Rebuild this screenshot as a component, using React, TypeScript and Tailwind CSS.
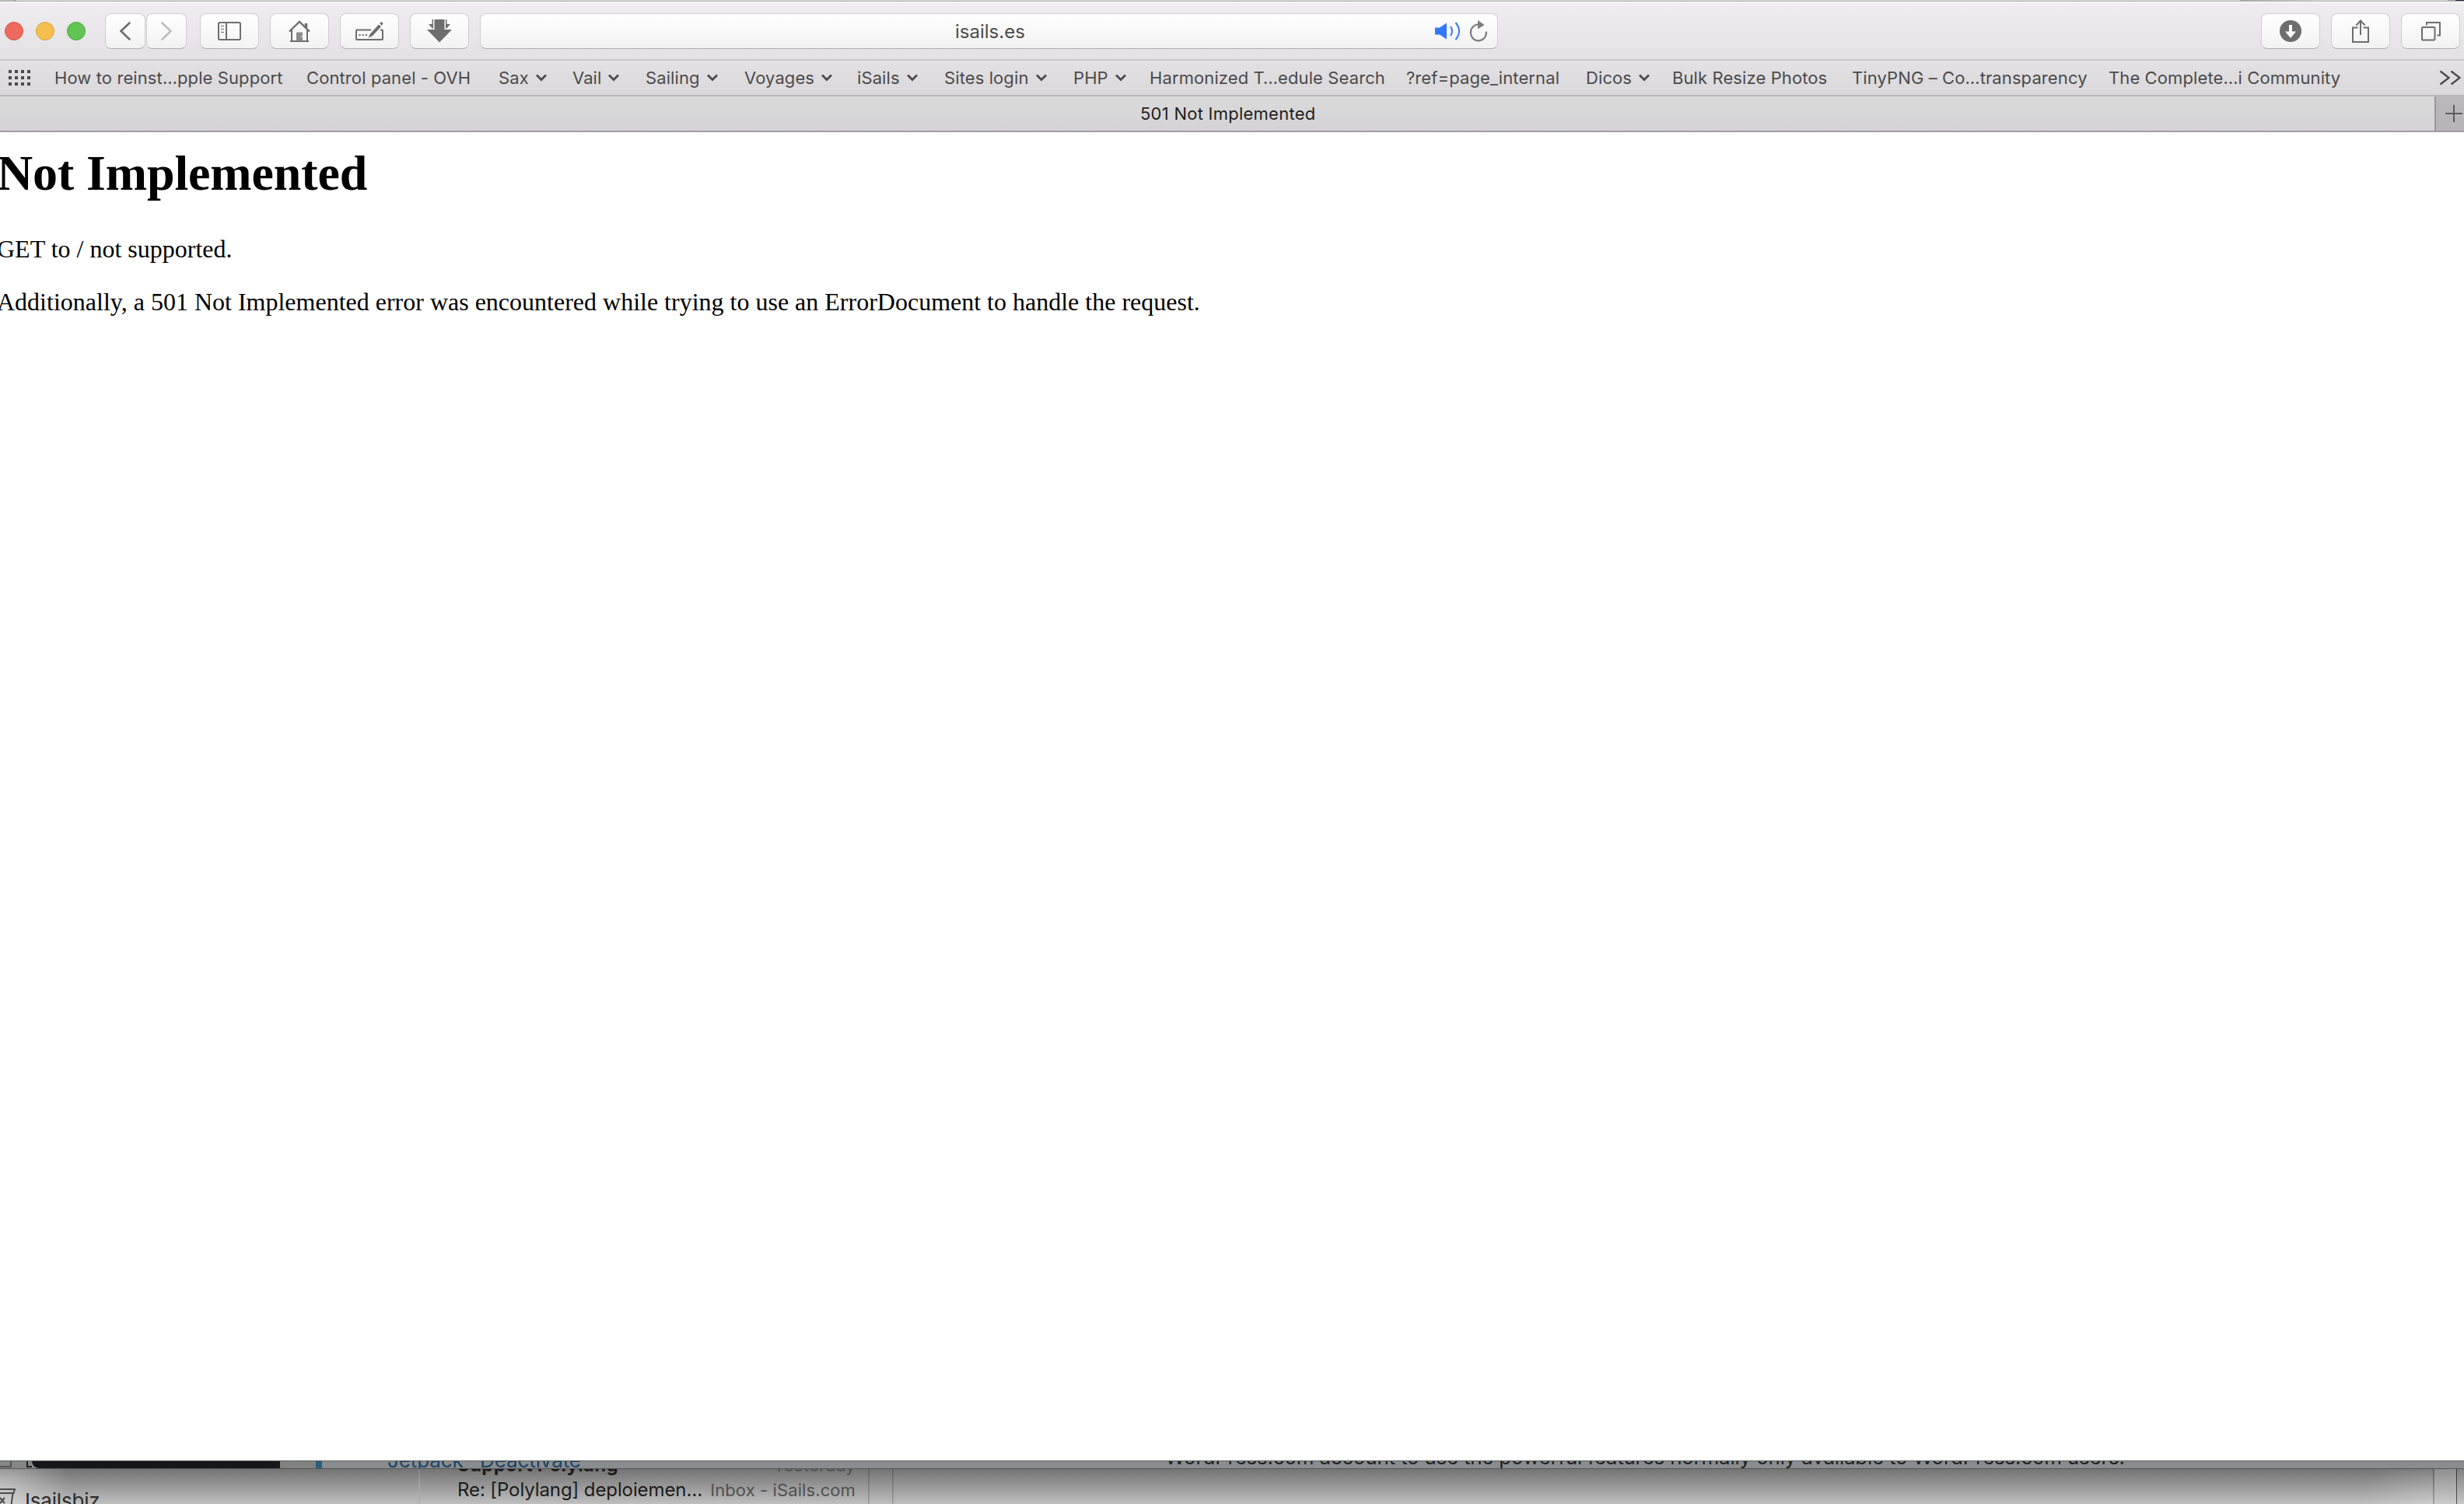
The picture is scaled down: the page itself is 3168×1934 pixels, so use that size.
import React from 'react';
import clsx from 'clsx';

interface Bookmark {
    label: string;
    width: string;
    menu?: boolean;
}

// width covers the label, its arrow and the space before the next item
const bookmarks: Bookmark[] = [
    { label: 'How to reinst…pple Support', width: 'w-[324px]' },
    { label: 'Control panel - OVH', width: 'w-[247px]' },
    { label: 'Sax', width: 'w-[95px]', menu: true },
    { label: 'Vail', width: 'w-[94px]', menu: true },
    { label: 'Sailing', width: 'w-[127px]', menu: true },
    { label: 'Voyages', width: 'w-[145px]', menu: true },
    { label: 'iSails', width: 'w-[112px]', menu: true },
    { label: 'Sites login', width: 'w-[166px]', menu: true },
    { label: 'PHP', width: 'w-[98px]', menu: true },
    { label: 'Harmonized T…edule Search', width: 'w-[330px]' },
    { label: '?ref=page_internal', width: 'w-[231px]' },
    { label: 'Dicos', width: 'w-[111px]', menu: true },
    { label: 'Bulk Resize Photos', width: 'w-[231px]' },
    { label: 'TinyPNG – Co…transparency', width: 'w-[330px]' },
    { label: 'The Complete…i Community', width: 'w-[425px]' },
];

const ToolButton: React.FC<{ className?: string; children: React.ReactNode }> = ({ className, children }) => (
    <button
        className={clsx(
            'h-[46px] shrink-0 flex items-center justify-center rounded-[8px] border border-[#d0ced0] border-b-[#aeb0ae] bg-gradient-to-b from-white to-[#f2f2f2]',
            className
        )}
    >
        {children}
    </button>
);

const Toolbar = () => (
    <div className="h-[76px] shrink-0 flex items-start pt-[15px] border-b-2 border-[#cac8cb] bg-gradient-to-b from-[#efedf0] to-[#e3e1e4] shadow-[inset_0_2px_0_#f8f7f8]">
        <div className="flex gap-4 pl-[6px] pt-[11px] w-[135px] shrink-0">
            <span className="size-6 rounded-full bg-[#ee6a5f] border border-[#d9534a]" />
            <span className="size-6 rounded-full bg-[#f5bf4f] border border-[#d8a13c]" />
            <span className="size-6 rounded-full bg-[#61c554] border border-[#4fa73f]" />
        </div>

        <div className="flex gap-px w-[122px] shrink-0">
            <ToolButton className="w-[52px]">
                <svg width="16" height="26" viewBox="0 0 16 26" fill="none" stroke="#6e6e6e" strokeWidth="2.6" strokeLinecap="round">
                    <path d="M13.5 2.5 2.5 13l11 10.500" />
                </svg>
            </ToolButton>
            <ToolButton className="w-[52px]">
                <svg width="16" height="26" viewBox="0 0 16 26" fill="none" stroke="#bdbdbd" strokeWidth="2.6" strokeLinecap="round">
                    <path d="M2.500 2.500 13.500 13l-11 10.500" />
                </svg>
            </ToolButton>
        </div>

        <div className="flex gap-[14px] w-[360px] shrink-0">
            <ToolButton className="w-[76px]">
                <svg width="30" height="24" viewBox="0 0 30 24" fill="none" stroke="#6e6e6e" strokeWidth="2">
                    <rect x="1" y="1" width="28" height="22" rx="1.500" />
                    <path d="M11 1v22" />
                    <path d="M4 5.500h4M4 9.500h4M4 13.500h4" stroke="#8a8a8a" strokeWidth="1.500" />
                </svg>
            </ToolButton>
            <ToolButton className="w-[76px]">
                <svg width="28" height="28" viewBox="0 0 28 28" fill="none" stroke="#6e6e6e" strokeWidth="2">
                    <path d="M1 14.500 14 2l13 12.500" strokeWidth="2.400" />
                    <path d="M4 12v14M24 12v14M2 27h24" />
                    <path d="M22.500 4v6" strokeWidth="3.500" />
                    <rect x="10" y="15.500" width="8" height="11" fill="#8c8c8c" stroke="none" />
                    <circle cx="16.500" cy="21" r=".8" fill="#fff" stroke="none" />
                </svg>
            </ToolButton>
            <ToolButton className="w-[76px]">
                <svg width="38" height="26" viewBox="0 0 38 26" fill="none" stroke="#6e6e6e" strokeWidth="2">
                    <path d="M21 11.500H3q-1 0-1 1V23q0 1 1 1h32q1 0 1-1V12.500q0-1-1-1h-2" />
                    <path d="M5.500 18h2M9.700 18h2M13.900 18h2" />
                    <path d="M17.500 21.800 20 16.500 31 4.500l3 2.800L23 19Z" fill="#6e6e6e" stroke="none" />
                    <path d="m32.200 3.200 1.300-1.500q1-.8 2.200.3 1.200 1.200.4 2.200L34.900 5.800Z" fill="#6e6e6e" stroke="none" />
                </svg>
            </ToolButton>
            <ToolButton className="w-[76px]">
                <svg width="32" height="30" viewBox="0 0 32 30" fill="#6e6e6e">
                    <path d="M9.500 0h13v13H32L16 29.500 0 13h9.500Z" />
                    <path d="M6.500 0H8v11.500H6.800L2 6h4.500ZM24 0h1.500v6H30l-4.800 5.500H24Z" />
                </svg>
            </ToolButton>
        </div>

        <div className="h-[46px] w-[1309px] shrink-0 flex items-center rounded-[8px] border border-[#d0ced0] border-b-[#aeb0ae] bg-gradient-to-b from-white to-[#f2f2f2]">
            <span className="pl-[610px] w-[1226px] pt-[2px] text-[24px] leading-[44px] text-[#4d4d4d]">isails.es</span>
            <svg className="shrink-0" width="34" height="24" viewBox="0 0 34 24" fill="none" stroke="#3478f6" strokeWidth="2">
                <path d="M1 7.500h6l9-6v21l-9-6H1Z" fill="#3478f6" stroke="none" />
                <path d="M21 6q4 6 0 12" />
                <path d="M27.500 1q9 11 0 22" />
            </svg>
            <svg className="ml-[11px] shrink-0" width="24" height="28" viewBox="0 0 24 28" fill="none" stroke="#7d7d7d" strokeWidth="2.200">
                <path d="M21.800 14.500A10 10.500 0 1 1 13 5.500" />
                <path d="M11 0 19.500 6 11 11.500Z" fill="#7d7d7d" stroke="none" />
            </svg>
        </div>

        <div className="flex gap-[14px] ml-auto pr-[5px]">
            <ToolButton className="w-[76px]">
                <svg width="28" height="28" viewBox="0 0 28 28">
                    <circle cx="14" cy="14" r="14" fill="#6e6e6e" />
                    <path d="M12 6h4v8.500h5L14 23 7 14.500h5Z" fill="#fff" />
                </svg>
            </ToolButton>
            <ToolButton className="w-[76px]">
                <svg width="24" height="30" viewBox="0 0 24 30" fill="none" stroke="#6e6e6e" strokeWidth="2">
                    <path d="M8.500 10.500H2V29h20V10.500h-6.500" />
                    <path d="M12 20V1.500M6.500 7.500 12 1.500l5.500 6" />
                </svg>
            </ToolButton>
            <ToolButton className="w-[76px]">
                <svg width="26" height="26" viewBox="0 0 26 26" fill="none" stroke="#6e6e6e" strokeWidth="2">
                    <rect x="2" y="8" width="16.500" height="16.500" rx="1" />
                    <path d="M8 5.500V2h17v16.500h-3.500" />
                </svg>
            </ToolButton>
        </div>
    </div>
);

const BookmarksBar = () => (
    <div className="h-[46px] shrink-0 flex items-center border-b-2 border-[#b9b7ba] bg-gradient-to-b from-[#e3e1e4] to-[#dad8db] text-[22px] tracking-[0.1px] text-[#4c4a4c]">
        <div className="w-[70px] pl-[11px] shrink-0">
            <div className="grid grid-cols-4 gap-1 w-7">
                {Array.from({ length: 12 }, (_, i) => (
                    <span key={i} className="size-1 bg-[#4c4a4c]" />
                ))}
            </div>
        </div>
        {bookmarks.map((item) => (
            <div key={item.label} className={clsx('shrink-0 flex items-center gap-[9px] whitespace-nowrap', item.width)}>
                <span>{item.label}</span>
                {item.menu && (
                    <svg width="14" height="10" viewBox="0 0 14 10" fill="none" stroke="#4c4a4c" strokeWidth="2.800">
                        <path d="m1 1.500 6 6 6-6" />
                    </svg>
                )}
            </div>
        ))}
        <svg className="shrink-0" width="28" height="20" viewBox="0 0 28 20" fill="none" stroke="#4c4a4c" strokeWidth="2.400">
            <path d="m1.500 1.500 11 8.500-11 8.500M15.500 1.500l11 8.500-11 8.500" />
        </svg>
    </div>
);

const TabBar = () => (
    <div className="h-[46px] shrink-0 flex border-b-2 border-[#9f9d9f]">
        <div className="w-[3130px] flex items-center bg-gradient-to-b from-[#dadada] to-[#d5d3d6]">
            <span className="pl-[1466px] text-[22px] tracking-[0.25px] text-[#1f1f21] whitespace-nowrap">501 Not Implemented</span>
        </div>
        <div className="w-[38px] flex items-center pl-[11px] border-l-2 border-[#999799] bg-gradient-to-b from-[#bbb9bc] to-[#b6b4b7]">
            <svg className="shrink-0" width="24" height="24" viewBox="0 0 24 24" stroke="#5c5a5c" strokeWidth="2">
                <path d="M12 1v22M1 12h22" />
            </svg>
        </div>
    </div>
);

const ArchiveIcon = () => (
    <svg className="shrink-0" width="20" height="26" viewBox="0 0 20 26" fill="none" stroke="#4b4b4b" strokeWidth="2">
        <path d="M-4 1h23l-1.500 5H-4M16.500 6 14 25H-4" />
        <path d="m0 12 6 7M6 12l-6 7" />
    </svg>
);

// Windows that show under the browser: a strip of the WordPress admin, then Mail
const BackgroundWindows = () => (
    <div className="h-14 shrink-0 flex flex-col overflow-hidden">
        <div className="h-[11px] shrink-0 flex border-t border-b border-t-[#5c625c] border-b-[#555555] bg-[#8a8d8f] overflow-hidden">
            <div className="w-[41px] shrink-0 h-3 bg-[#858585] flex overflow-hidden">
                <div className="h-[8px] w-[15px] border-r-2 border-b-2 border-[#555] mr-[19px]" />
                <div className="h-[8px] w-[7px] border-l-2 border-b-2 border-[#222]" />
            </div>
            <div className="w-[319px] shrink-0 rounded-bl-[10px] bg-[#15181b]" />
            <div className="w-[46px] shrink-0 bg-[#828282]" />
            <div className="w-2 shrink-0 bg-[#27607f]" />
            <div className="relative w-full">
                <span className="absolute left-[84px] -top-[17px] text-[26px] leading-[32px] tracking-[-0.1px] text-[#1c4568] whitespace-nowrap">Jetpack</span>
                <span className="absolute left-[203px] -top-[17px] text-[26px] leading-[32px] tracking-[-0.1px] text-[#1c4568] whitespace-nowrap">Deactivate</span>
                <span className="absolute left-[1084px] -top-[21px] text-[26px] leading-[32px] tracking-[-0.24px] text-[#1e2224] whitespace-nowrap">
                    WordPress.com account to use the powerful features normally only available to WordPress.com users.
                </span>
            </div>
        </div>
        <div className="h-[45px] shrink-0 flex overflow-hidden bg-gradient-to-b from-[#747474] to-[#bfbfbf] bg-clip-border">
            <div className="w-[540px] shrink-0 flex items-start pt-[25px] border-r-2 border-black/15 bg-[radial-gradient(ellipse_90px_70px_at_0_50%,rgba(255,255,255,0.4),transparent)]">
                <ArchiveIcon />
                <span className="pl-3 text-[26px] leading-[32px] tracking-[-0.2px] text-[#2a2a2a]">Isailsbiz</span>
            </div>
            <div className="w-[578px] shrink-0 pl-[48px] pr-[16px] border-r-2 border-black/15 text-[24px] leading-[32px] whitespace-nowrap">
                <div className="-mt-[21px] flex justify-between">
                    <span className="font-bold tracking-[0.3px] text-[#1b1b1b]">Support Polylang</span>
                    <span className="text-[22px] tracking-[0.3px] text-[#505050]">Yesterday</span>
                </div>
                <div className="flex justify-between">
                    <span className="tracking-[-0.1px] text-[#1b1b1b]">Re: [Polylang] deploiemen…</span>
                    <span className="text-[22px] tracking-[0.1px] text-[#505050]">Inbox - iSails.com</span>
                </div>
            </div>
            <div className="w-[31px] shrink-0 border-r-2 border-black/15" />
            <div className="w-[1981px] shrink-0 border-r-2 border-black/15 bg-[radial-gradient(ellipse_90px_70px_at_100%_100%,rgba(255,255,255,0.2),transparent)]" />
            <div className="w-[29px] shrink-0 border-r border-black/60 bg-white/20" />
            <div className="grow bg-white/10" />
        </div>
    </div>
);

export default function App() {
    return (
        <div className="w-[3168px] h-[1934px] flex flex-col overflow-hidden bg-white font-['Inter',sans-serif]">
            <div className="h-[2px] shrink-0 flex bg-[#dcdcdb] border-b border-[#adaead]">
                <div className="w-[20px] bg-[#bdbdbd] border-r border-[#666]" />
                <div className="ml-auto w-[267px] bg-gradient-to-r from-[#a5a5a5] to-[#dcdcdb] to-40%" />
                <div className="w-[10px] bg-[#aaa]" />
                <div className="w-[11px] bg-[#1c2a3f]" />
            </div>
            <Toolbar />
            <BookmarksBar />
            <TabBar />
            <main className="h-[1708px] shrink-0 -ml-[4px] pt-4 text-black font-['Liberation_Serif',serif]">
                <h1 className="text-[64px] leading-[74px] tracking-[-0.13px] font-bold">Not Implemented</h1>
                <p className="mt-[42px] text-[32px] leading-[36px]">GET to / not supported.</p>
                <p className="mt-8 text-[32px] leading-[36px]">
                    Additionally, a 501 Not Implemented error was encountered while trying to use an ErrorDocument to handle the request.
                </p>
            </main>
            <BackgroundWindows />
        </div>
    );
}
